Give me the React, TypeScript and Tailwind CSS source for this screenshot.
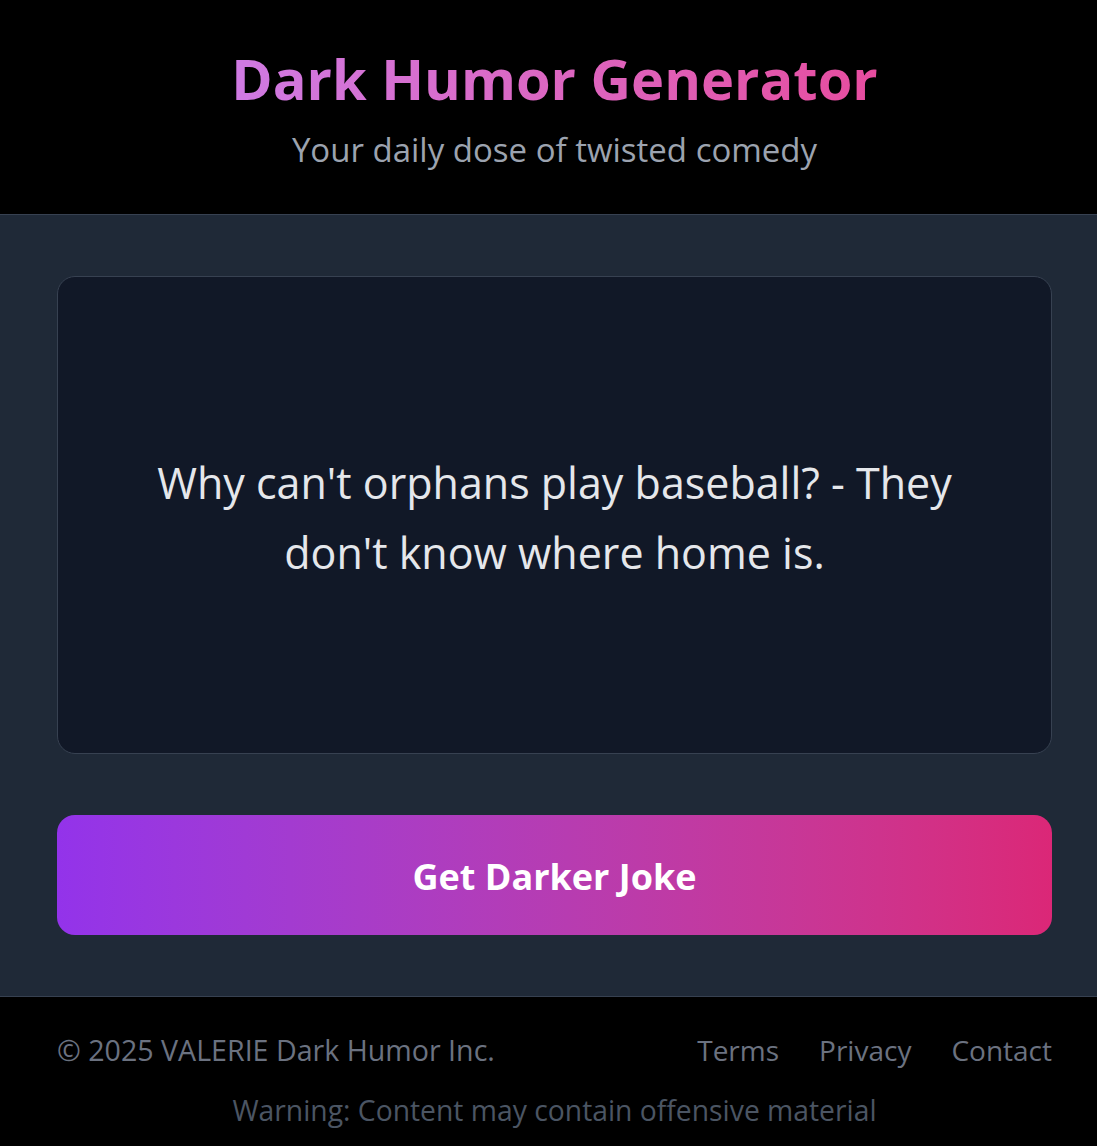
import { useState } from 'react'

const jokes = [
  "Why can't orphans play baseball? - They don't know where home is.",
]

export default function App() {
  const [joke, setJoke] = useState(jokes[0])

  return (
    <div className="min-h-screen w-full bg-black flex flex-col font-['Open_Sans',sans-serif]">
      {/* Header */}
      <header className="h-[215px] pl-[12px] border-b border-[#374151] flex flex-col items-center justify-center gap-[14px]">
        <h1 className="text-[56px] leading-[72px] font-bold bg-gradient-to-r from-[#cf7ae3] to-[#e64c9f] bg-clip-text text-transparent">
          Dark Humor Generator
        </h1>
        <p className="text-[33px] leading-[44px] text-[#9ca3af]">Your daily dose of twisted comedy</p>
      </header>

      {/* Main */}
      <main className="bg-[#1f2937] pl-[57px] pr-[45px] py-[61px] flex flex-col gap-[61px]">
        <div className="h-[478px] rounded-[18px] border border-[#374151] bg-[#111827] flex items-center justify-center px-[80px] pt-[6px]">
          <p className="text-center text-[43px] leading-[70px] text-[#e5e7eb]">{joke}</p>
        </div>
        <button
          onClick={() => setJoke(jokes[Math.floor(Math.random() * jokes.length)])}
          className="h-[120px] rounded-[18px] bg-gradient-to-r from-[#9333ea] to-[#db2777] text-white text-[36px] font-bold pt-[3px]"
        >
          Get Darker Joke
        </button>
      </main>

      {/* Footer */}
      <footer className="border-t border-[#374151] bg-black pl-[57px] pr-[45px] pt-[33px] pb-[16px] flex flex-col gap-[20px]">
        <div className="flex items-center justify-between h-[40px]">
          <span className="text-[28.6px] text-[#6b7280]">© 2025 VALERIE Dark Humor Inc.</span>
          <nav className="flex gap-[40px] text-[28px] text-[#6b7280]">
            <a href="#">Terms</a>
            <a href="#">Privacy</a>
            <a href="#">Contact</a>
          </nav>
        </div>
        <p className="text-center text-[28.3px] leading-[40px] text-[#4b5563]">Warning: Content may contain offensive material</p>
      </footer>
    </div>
  )
}
